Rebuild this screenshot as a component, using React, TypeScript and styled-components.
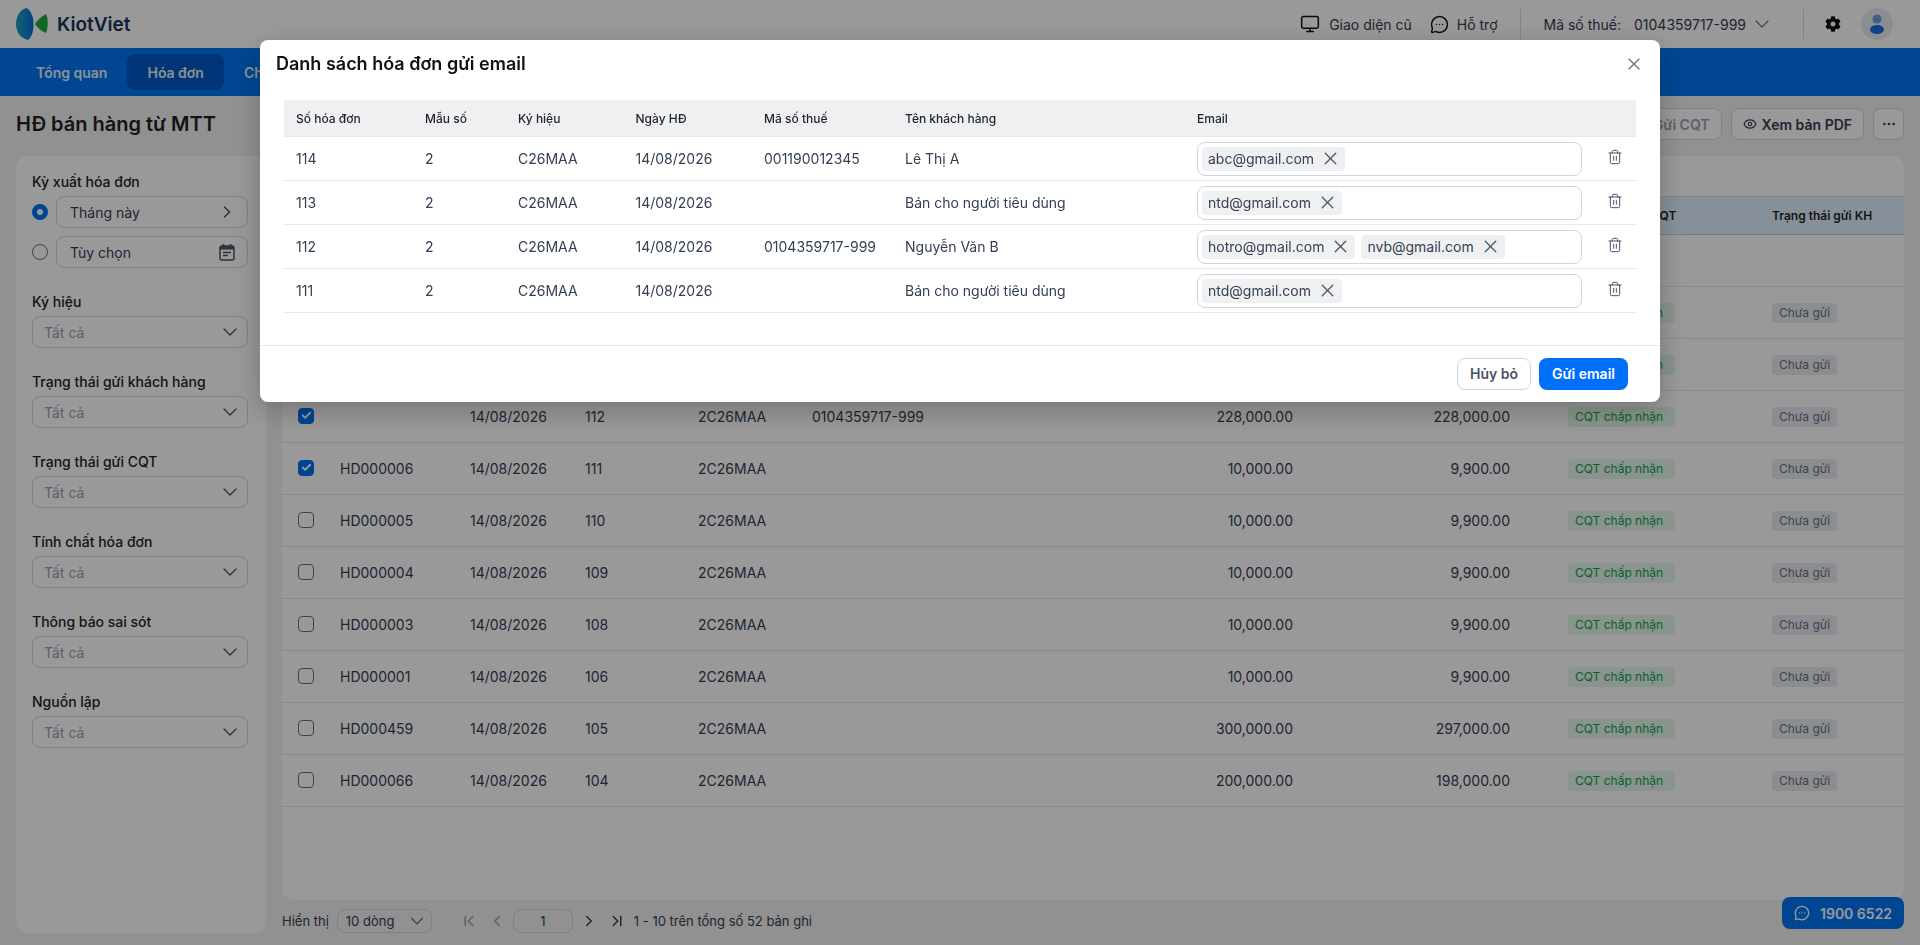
import React from 'react';
import styled, { createGlobalStyle } from 'styled-components';
import {
  Monitor,
  MessageCircleMore,
  ChevronDown,
  ChevronRight,
  ChevronLeft,
  ChevronFirst,
  ChevronLast,
  Eye,
  Ellipsis,
  X,
  Trash2,
  Check,
} from 'lucide-react';
import { FaCog } from 'react-icons/fa';

const GlobalStyle = createGlobalStyle`
  html, body {
    margin: 0;
    padding: 0;
    height: 100%;
    overflow: hidden;
    background: #f0f2f1;
    font-family: Inter, "Noto Sans", sans-serif;
    font-size: 14px;
    color: #1f2328;
  }
  * { box-sizing: border-box; }
`;

const Page = styled.div`
  display: flex;
  flex-direction: column;
  height: 945px;
`;

const TopBar = styled.header`
  display: flex;
  align-items: center;
  height: 48px;
  padding: 0 27px 0 16px;
  background: #fff;
`;

const Logo = styled.div`
  display: flex;
  align-items: center;
  gap: 8px;
  font-size: 19px;
  font-weight: 600;
  color: #17355f;
`;

const TopActions = styled.div`
  display: flex;
  align-items: center;
  margin-left: auto;
  height: 30px;
`;

const TopLink = styled.div<{ $end?: boolean }>`
  display: flex;
  align-items: center;
  gap: ${props => (props.$end ? 8 : 9)}px;
  margin-right: ${props => (props.$end ? 22 : 18)}px;
  color: #344054;
  svg { color: #111; }
`;

const TopDivider = styled.div`
  width: 1px;
  height: 30px;
  background: #d8dbe0;
`;

const TaxInfo = styled.div`
  display: flex;
  align-items: center;
  margin: 0 29px 0 23px;
  color: #344054;
  span { margin-right: 13px; }
  svg { margin-left: 4px; color: #667085; }
`;

const GearButton = styled.div`
  display: flex;
  margin: 0 20px 0 21px;
  color: #111;
`;

const Avatar = styled.svg`
  width: 32px;
  height: 32px;
`;

const NavBar = styled.nav`
  display: flex;
  align-items: center;
  height: 48px;
  padding-left: 16px;
  background: #0076f5;
`;

const NavItem = styled.div<{ $active?: boolean }>`
  display: flex;
  align-items: center;
  height: 36px;
  padding: 0 20px;
  border-radius: 8px;
  font-weight: 600;
  color: rgba(255, 255, 255, 0.92);
  background: ${props => (props.$active ? '#005ac8' : 'transparent')};
`;

const Content = styled.main`
  flex: 1;
  display: flex;
  flex-direction: column;
  min-height: 0;
  padding: 12px 16px;
`;

const TitleRow = styled.div`
  display: flex;
  align-items: center;
  gap: 9px;
  height: 32px;
  margin-bottom: 16px;
`;

const PageTitle = styled.h1`
  margin: 0 auto 0 0;
  font-size: 20px;
  line-height: 32px;
  font-weight: 600;
  color: #1f2328;
`;

const GhostButton = styled.button<{ $muted?: boolean }>`
  display: flex;
  align-items: center;
  gap: 5px;
  height: 32px;
  padding: 0 11px;
  border: 1px solid #d0d5dd;
  border-radius: 8px;
  background: #fff;
  font: 600 14px Inter, sans-serif;
  color: ${props => (props.$muted ? '#98a2b3' : '#344054')};
`;

const IconButton = styled(GhostButton)`
  width: 31px;
  padding: 0;
  justify-content: center;
`;

const Columns = styled.div`
  flex: 1;
  display: flex;
  gap: 16px;
  min-height: 0;
`;

const Sidebar = styled.aside`
  display: flex;
  flex-direction: column;
  gap: 24px;
  width: 250px;
  padding: 16px 18px 16px 16px;
  border-radius: 12px;
  background: #fff;
`;

const FilterGroup = styled.div`
  display: flex;
  flex-direction: column;
  gap: 4px;
`;

const FilterLabel = styled.div`
  font-weight: 500;
  line-height: 20px;
  color: #1f2328;
`;

const RadioRow = styled.div<{ $last?: boolean }>`
  display: flex;
  align-items: center;
  gap: 8px;
  margin-bottom: ${props => (props.$last ? 0 : 4)}px;
`;

const Radio = styled.span<{ $checked?: boolean }>`
  flex: none;
  width: 16px;
  height: 16px;
  border-radius: 50%;
  border: ${props => (props.$checked ? '5px solid #0070f4' : '1px solid #667085')};
  background: #fff;
`;

const Field = styled.div<{ $muted?: boolean }>`
  flex: 1 0 auto;
  display: flex;
  align-items: center;
  justify-content: space-between;
  height: 32px;
  padding: ${props => (props.$muted ? '0 5px 0 11px' : '0 12px 0 13px')};
  border: 1px solid #d0d5dd;
  border-radius: 8px;
  background: #fff;
  color: ${props => (props.$muted ? '#98a2b3' : '#344054')};
  svg { color: #475467; flex: none; }
`;

const FieldChevron = styled(ChevronRight)`
  margin-right: -2px;
`;

const MainColumn = styled.section`
  flex: 1;
  display: flex;
  flex-direction: column;
  min-width: 0;
`;

const TableCard = styled.div`
  flex: 1;
  padding-top: 40px;
  border-radius: 12px;
  background: #fff;
  overflow: hidden;
`;

const InvoiceTable = styled.table`
  width: 100%;
  table-layout: fixed;
  border-collapse: collapse;
  th {
    height: 38px;
    padding: 0 8px;
    background: #e1f1ff;
    border-top: 1px solid #d5dde5;
    border-bottom: 1px solid #b5d3f0;
    font-size: 12px;
    font-weight: 600;
    text-align: left;
    color: #1f2328;
    white-space: nowrap;
  }
  td {
    height: 52px;
    padding: 0 8px;
    border-bottom: 1px solid #e4e7ec;
    color: #344054;
    white-space: nowrap;
  }
`;

const Amount = styled.td<{ $gap?: number }>`
  text-align: right;
  && { padding-right: ${props => props.$gap ?? 8}px; }
`;

const CheckBox = styled.span<{ $checked?: boolean }>`
  display: flex;
  align-items: center;
  justify-content: center;
  width: 16px;
  height: 16px;
  margin: -2px 0 0 8px;
  border-radius: 4px;
  border: 1px solid ${props => (props.$checked ? '#0070f4' : '#667085')};
  background: ${props => (props.$checked ? '#0070f4' : '#fff')};
  color: #fff;
`;

const StatusChip = styled.span<{ $ok?: boolean }>`
  display: inline-block;
  height: 20px;
  padding: 0 ${props => (props.$ok ? '12px' : '7px')} 0 7px;
  border-radius: 4px;
  font-size: 12px;
  line-height: 20px;
  background: ${props => (props.$ok ? '#e3f7ea' : '#e9ecf0')};
  color: ${props => (props.$ok ? '#12a150' : '#667085')};
`;

const Pager = styled.div`
  display: flex;
  align-items: center;
  height: 33px;
  padding-top: 9px;
  font-size: 13px;
  color: #344054;
`;

const PageSize = styled.div`
  display: flex;
  align-items: center;
  justify-content: space-between;
  width: 95px;
  height: 24px;
  margin: 0 23px 0 8px;
  padding: 0 3px 0 8px;
  border: 1px solid #d0d5dd;
  border-radius: 8px;
  svg { color: #667085; }
`;

const PagerIcon = styled.span<{ $off?: boolean }>`
  display: flex;
  width: 28px;
  justify-content: center;
  color: ${props => (props.$off ? '#98a2b3' : '#344054')};
`;

const PageInput = styled.div`
  display: flex;
  align-items: center;
  justify-content: center;
  width: 60px;
  height: 24px;
  margin: 0 2px 0 2px;
  border: 1px solid #d0d5dd;
  border-radius: 8px;
`;

const PagerText = styled.span`
  margin-left: 3px;
`;

const Hotline = styled.div`
  position: fixed;
  right: 16px;
  bottom: 16px;
  display: flex;
  align-items: center;
  gap: 10px;
  width: 122px;
  height: 32px;
  padding-left: 12px;
  border-radius: 8px;
  background: #0076f5;
  font-size: 14px;
  font-weight: 600;
  color: #fff;
`;

const Overlay = styled.div`
  position: fixed;
  inset: 0;
  z-index: 10;
  display: flex;
  justify-content: center;
  align-items: flex-start;
  padding-top: 40px;
  background: rgba(0, 0, 0, 0.4);
`;

const Modal = styled.div`
  width: 1400px;
  border-radius: 8px;
  background: #fff;
  box-shadow: 0 8px 28px rgba(0, 0, 0, 0.25);
`;

const ModalHeader = styled.div`
  display: flex;
  align-items: center;
  justify-content: space-between;
  height: 60px;
  padding: 0 16px 13px 16px;
  svg { color: #667085; }
`;

const ModalTitle = styled.h2`
  margin: 0;
  font-size: 18px;
  font-weight: 600;
  color: #111;
`;

const ModalBody = styled.div`
  padding: 0 24px 32px;
`;

const EmailTable = styled.table`
  width: 100%;
  table-layout: fixed;
  border-collapse: collapse;
  th {
    height: 36px;
    padding: 1px 12px 0;
    background: #eff0f2;
    border-bottom: 1px solid #e4e7ec;
    font-size: 12px;
    font-weight: 500;
    text-align: left;
    color: #1f2328;
  }
  td {
    height: 44px;
    padding: 1px 12px 0;
    border-bottom: 1px solid #e6e8ec;
    color: #344054;
    white-space: nowrap;
  }
`;

const EmailInput = styled.div`
  display: flex;
  align-items: center;
  gap: 6px;
  height: 34px;
  padding: 0 4px;
  border: 1px solid #d0d5dd;
  border-radius: 8px;
`;

const EmailChip = styled.span`
  display: flex;
  align-items: center;
  gap: 6px;
  height: 24px;
  padding: 0 4px 0 6px;
  border-radius: 4px;
  background: #eff0f2;
  color: #344054;
  svg { color: #475467; }
`;

const TrashCell = styled.td`
  && { padding: 0 0 3px; }
  svg { display: block; margin: 0 auto; color: #475467; }
`;

const ModalFooter = styled.div`
  display: flex;
  justify-content: flex-end;
  gap: 8px;
  padding: 12px 32px;
  border-top: 1px solid #e6e8ec;
`;

const CancelButton = styled.button`
  width: 74px;
  height: 32px;
  border: 1px solid #d0d5dd;
  border-radius: 8px;
  background: #fff;
  font: 600 14px Inter, sans-serif;
  color: #475467;
`;

const SendButton = styled.button`
  width: 89px;
  height: 32px;
  border: 0;
  border-radius: 8px;
  background: #0070fa;
  font: 600 14px Inter, sans-serif;
  color: #fff;
`;

const KiotLogo = () => (
  <svg width="33" height="34" viewBox="16 7 33 34">
    <defs>
      <linearGradient id="kvBlue" x1="0" x2="1" y1="0" y2="0">
        <stop offset="0" stopColor="#1aa3b8" />
        <stop offset="1" stopColor="#0a6fe0" />
      </linearGradient>
    </defs>
    <path d="M27 8C19.5 9 16 17 16 24c0 8 4 14 12 16 4.5-3.5 5.5-10 5.5-16 0-7-2-12.500-6.500-16Z" fill="url(#kvBlue)" />
    <path d="M46 14c-5 3-9 6-11 10 2 3 6 7 11 9 2-4 2.500-15 0-19Z" fill="#1cae3c" />
  </svg>
);

const CalendarIcon = () => (
  <svg width="16" height="18" viewBox="0 0 16 18" fill="none">
    <rect x="1" y="3" width="14" height="14" rx="2" stroke="#475467" strokeWidth="1.500" />
    <rect x="1" y="3" width="14" height="3.500" fill="#475467" />
    <path d="M4.500 1v3M11.500 1v3" stroke="#475467" strokeWidth="1.500" />
    <path d="M4 9.500h8M4 12.500h5" stroke="#475467" strokeWidth="1.400" />
  </svg>
);

const filters = ['Ký hiệu', 'Trạng thái gửi khách hàng', 'Trạng thái gửi CQT', 'Tính chất hóa đơn', 'Thông báo sai sót', 'Nguồn lập'];

const invoices = [
  { code: 'HD000008', no: 114, tax: '001190012345', total: '50,000.00', net: '50,000.00', checked: true },
  { code: 'HD000007', no: 113, tax: '', total: '10,000.00', net: '9,900.00', checked: true },
  { code: '', no: 112, tax: '0104359717-999', total: '228,000.00', net: '228,000.00', checked: true },
  { code: 'HD000006', no: 111, tax: '', total: '10,000.00', net: '9,900.00', checked: true },
  { code: 'HD000005', no: 110, tax: '', total: '10,000.00', net: '9,900.00' },
  { code: 'HD000004', no: 109, tax: '', total: '10,000.00', net: '9,900.00' },
  { code: 'HD000003', no: 108, tax: '', total: '10,000.00', net: '9,900.00' },
  { code: 'HD000001', no: 106, tax: '', total: '10,000.00', net: '9,900.00' },
  { code: 'HD000459', no: 105, tax: '', total: '300,000.00', net: '297,000.00' },
  { code: 'HD000066', no: 104, tax: '', total: '200,000.00', net: '198,000.00' },
];

const invoiceCols = [50, 130, 115, 113, 114, 250, 247, 259, 204, 140];
const emailCols = [129, 93, 117.5, 128.5, 141, 292, 409, 42];

const recipients = [
  { no: 114, tax: '001190012345', name: 'Lê Thị A', emails: ['abc@gmail.com'] },
  { no: 113, tax: '', name: 'Bán cho người tiêu dùng', emails: ['ntd@gmail.com'] },
  { no: 112, tax: '0104359717-999', name: 'Nguyễn Văn B', emails: ['hotro@gmail.com', 'nvb@gmail.com'] },
  { no: 111, tax: '', name: 'Bán cho người tiêu dùng', emails: ['ntd@gmail.com'] },
];

const App: React.FC = () => {
  return (
    <>
      <GlobalStyle />
      <Page>
        <TopBar>
          <Logo>
            <KiotLogo />
            KiotViet
          </Logo>
          <TopActions>
            <TopLink>
              <Monitor size={20} strokeWidth={1.8} />
              Giao diện cũ
            </TopLink>
            <TopLink $end>
              <MessageCircleMore size={19} strokeWidth={1.8} />
              Hỗ trợ
            </TopLink>
            <TopDivider />
            <TaxInfo>
              <span>Mã số thuế:</span>
              0104359717-999
              <ChevronDown size={24} strokeWidth={1.2} />
            </TaxInfo>
            <TopDivider />
            <GearButton>
              <FaCog size={16} />
            </GearButton>
            <Avatar viewBox="0 0 32 32">
              <circle cx="16" cy="16" r="16" fill="#e9ecf1" />
              <circle cx="16" cy="11" r="4.500" fill="#6f9fe0" />
              <ellipse cx="16" cy="21.500" rx="7" ry="4.500" fill="#1f6fe0" />
            </Avatar>
          </TopActions>
        </TopBar>
        <NavBar>
          <NavItem>Tổng quan</NavItem>
          <NavItem $active>Hóa đơn</NavItem>
          <NavItem>Chứng từ</NavItem>
        </NavBar>
        <Content>
          <TitleRow>
            <PageTitle>HĐ bán hàng từ MTT</PageTitle>
            <GhostButton $muted>Gửi CQT</GhostButton>
            <GhostButton>
              <Eye size={14} />
              Xem bản PDF
            </GhostButton>
            <IconButton>
              <Ellipsis size={16} />
            </IconButton>
          </TitleRow>
          <Columns>
            <Sidebar>
              <FilterGroup>
                <FilterLabel>Kỳ xuất hóa đơn</FilterLabel>
                <RadioRow>
                  <Radio $checked />
                  <Field>
                    Tháng này
                    <FieldChevron size={20} strokeWidth={1.8} />
                  </Field>
                </RadioRow>
                <RadioRow $last>
                  <Radio />
                  <Field>
                    Tùy chọn
                    <CalendarIcon />
                  </Field>
                </RadioRow>
              </FilterGroup>
              {filters.map(label => (
                <FilterGroup key={label}>
                  <FilterLabel>{label}</FilterLabel>
                  <Field $muted>
                    Tất cả
                    <ChevronDown size={24} strokeWidth={1.4} />
                  </Field>
                </FilterGroup>
              ))}
            </Sidebar>
            <MainColumn>
              <TableCard>
                <InvoiceTable>
                  <colgroup>
                    {invoiceCols.map((w, i) => (
                      <col key={i} width={w} />
                    ))}
                  </colgroup>
                  <thead>
                    <tr>
                      <th />
                      <th>Mã hóa đơn</th>
                      <th>Ngày HĐ</th>
                      <th>Số HĐ</th>
                      <th>Ký hiệu</th>
                      <th>Mã số thuế</th>
                      <th />
                      <th />
                      <th>Trạng thái gửi CQT</th>
                      <th>Trạng thái gửi KH</th>
                    </tr>
                  </thead>
                  <tbody>
                    <tr>
                      <td colSpan={10} />
                    </tr>
                    {invoices.map(row => (
                      <tr key={row.no}>
                        <td>
                          <CheckBox $checked={row.checked}>
                            {row.checked && <Check size={11} strokeWidth={4} />}
                          </CheckBox>
                        </td>
                        <td>{row.code}</td>
                        <td>14/08/2026</td>
                        <td>{row.no}</td>
                        <td>2C26MAA</td>
                        <td>{row.tax}</td>
                        <Amount>{row.total}</Amount>
                        <Amount $gap={50}>{row.net}</Amount>
                        <td>
                          <StatusChip $ok>CQT chấp nhận</StatusChip>
                        </td>
                        <td>
                          <StatusChip>Chưa gửi</StatusChip>
                        </td>
                      </tr>
                    ))}
                  </tbody>
                </InvoiceTable>
              </TableCard>
              <Pager>
                Hiển thị
                <PageSize>
                  10 dòng
                  <ChevronDown size={22} strokeWidth={1.3} />
                </PageSize>
                <PagerIcon $off>
                  <ChevronFirst size={18} />
                </PagerIcon>
                <PagerIcon $off>
                  <ChevronLeft size={18} />
                </PagerIcon>
                <PageInput>1</PageInput>
                <PagerIcon>
                  <ChevronRight size={18} />
                </PagerIcon>
                <PagerIcon>
                  <ChevronLast size={18} />
                </PagerIcon>
                <PagerText>1 - 10 trên tổng số 52 bản ghi</PagerText>
              </Pager>
            </MainColumn>
          </Columns>
        </Content>
        <Hotline>
          <MessageCircleMore size={16} />
          1900 6522
        </Hotline>
      </Page>
      <Overlay>
        <Modal>
          <ModalHeader>
            <ModalTitle>Danh sách hóa đơn gửi email</ModalTitle>
            <X size={20} strokeWidth={1.5} />
          </ModalHeader>
          <ModalBody>
            <EmailTable>
              <colgroup>
                {emailCols.map((w, i) => (
                  <col key={i} width={w} />
                ))}
              </colgroup>
              <thead>
                <tr>
                  <th>Số hóa đơn</th>
                  <th>Mẫu số</th>
                  <th>Ký hiệu</th>
                  <th>Ngày HĐ</th>
                  <th>Mã số thuế</th>
                  <th>Tên khách hàng</th>
                  <th>Email</th>
                  <th />
                </tr>
              </thead>
              <tbody>
                {recipients.map(row => (
                  <tr key={row.no}>
                    <td>{row.no}</td>
                    <td>2</td>
                    <td>C26MAA</td>
                    <td>14/08/2026</td>
                    <td>{row.tax}</td>
                    <td>{row.name}</td>
                    <td>
                      <EmailInput>
                        {row.emails.map(email => (
                          <EmailChip key={email}>
                            {email}
                            <X size={21} strokeWidth={1.5} />
                          </EmailChip>
                        ))}
                      </EmailInput>
                    </td>
                    <TrashCell>
                      <Trash2 size={16} strokeWidth={1.5} />
                    </TrashCell>
                  </tr>
                ))}
              </tbody>
            </EmailTable>
          </ModalBody>
          <ModalFooter>
            <CancelButton>Hủy bỏ</CancelButton>
            <SendButton>Gửi email</SendButton>
          </ModalFooter>
        </Modal>
      </Overlay>
    </>
  );
};

export default App;
